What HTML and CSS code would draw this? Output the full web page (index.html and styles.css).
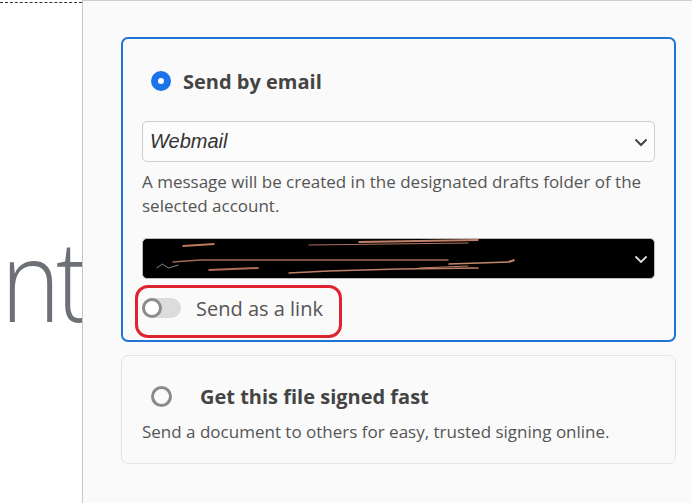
FILE: index.html
```html
<!DOCTYPE html>
<html>
<head>
<meta charset="utf-8">
<link rel="stylesheet" href="styles.css">
</head>
<body>
<div class="left">
  <div class="dash"></div>
  <div class="bigword">nt</div>
</div>
<div class="panel">
  <div class="card card-active">
    <div class="option-head">
      <span class="radio radio-on"></span>
      <span class="option-title">Send by email</span>
    </div>
    <div class="select">
      <span class="select-value">Webmail</span>
      <svg class="chev" width="14" height="10" viewBox="0 0 14 10"><path d="M1.5 2.5 L7 8 L12.5 2.5" fill="none" stroke="#444" stroke-width="2"/></svg>
    </div>
    <p class="desc">A message will be created in the designated drafts folder of the selected account.</p>
    <div class="select select-dark">
      <svg class="redact" width="480" height="41" viewBox="0 0 480 41">
        <path d="M34 8 L66 6" stroke="#c07a5a" stroke-width="2"/>
        <path d="M160 7 L320 5" stroke="#b07060" stroke-width="1.2"/>
        <path d="M210 4 L330 2" stroke="#c0806a" stroke-width="2"/>
        <path d="M24 24 L52 22 L300 22" stroke="#a06a55" stroke-width="1.3"/>
        <path d="M300 26 L360 24" stroke="#c08a6a" stroke-width="1.4"/>
        <path d="M60 32 L110 30" stroke="#b07058" stroke-width="2"/>
        <path d="M140 35 L180 33 L250 31 L330 30" stroke="#c0806a" stroke-width="1.5"/>
        <path d="M270 30 L320 28" stroke="#c08060" stroke-width="1"/>
        <path d="M8 30 L14 26 L20 30 L30 27" stroke="#888" stroke-width="1"/>
        <path d="M360 24 L366 22" stroke="#d08070" stroke-width="2"/>
      </svg>
      <svg class="chev" width="14" height="10" viewBox="0 0 14 10"><path d="M1.5 2.5 L7 8 L12.5 2.5" fill="none" stroke="#ddd" stroke-width="1.8"/></svg>
    </div>
    <div class="toggle-row">
      <span class="toggle"><span class="knob"></span></span>
      <span class="toggle-label">Send as a link</span>
      <span class="annot"></span>
    </div>
  </div>
  <div class="card card-plain">
    <div class="option-head option-head-2">
      <span class="radio radio-off"></span>
      <span class="option-title option-title-2">Get this file signed fast</span>
    </div>
    <p class="desc desc-2">Send a document to others for easy, trusted signing online.</p>
  </div>
</div>
</body>
</html>
```

FILE: styles.css
```css
html, body {
  margin: 0;
  padding: 0;
}
body {
  width: 692px;
  height: 503px;
  overflow: hidden;
  display: flex;
  font-family: "Open Sans", "Noto Sans", sans-serif;
  background: #fff;
}
.left {
  width: 82px;
  flex: none;
  position: relative;
  overflow: hidden;
  display: flex;
  flex-direction: column;
}
.dash {
  height: 0;
  border-top: 1px dashed #333;
  margin-top: 2px;
}
.bigword {
  margin-top: 220px;
  margin-left: 1px;
  font-size: 112px;
  font-weight: 300;
  color: #6d7077;
  line-height: 1;
  white-space: nowrap;
  letter-spacing: -5px;
  transform: scaleX(0.9);
  transform-origin: left center;
}
.panel {
  flex: 1;
  background: #fafafa;
  border-left: 1px solid #c8c8c8;
  border-top: 1px solid #cfcfcf;
  padding: 36px 16px 0 38px;
  display: flex;
  flex-direction: column;
}
.card {
  border-radius: 7px;
  background: #fafafa;
}
.card-active {
  border: 2px solid #1f74d6;
  padding: 0 19px 20px 19px;
}
.option-head {
  display: flex;
  align-items: center;
  height: 28px;
  margin-top: 28px;
  padding-left: 9px;
}
.radio {
  width: 20px;
  height: 20px;
  border-radius: 50%;
  box-sizing: border-box;
  flex: none;
}
.radio-on {
  border: 7px solid #1a73e8;
  background: #fff;
}
.radio-off {
  border: 3px solid #8a8a8a;
  width: 21px;
  height: 21px;
}
.option-title {
  margin-left: 12px;
  font-size: 20px;
  font-weight: 700;
  color: #444;
}
.select {
  margin-top: 26px;
  height: 41px;
  box-sizing: border-box;
  border: 1px solid #cdcdcd;
  border-radius: 5px;
  background: #fcfcfc;
  display: flex;
  align-items: center;
  padding: 0 6px 0 7px;
}
.select-value {
  flex: 1;
  font-style: italic;
  font-size: 20px;
  color: #333;
  font-family: "Liberation Sans", Arial, sans-serif;
}
.chev {
  flex: none;
}
.desc {
  margin: 8px 0 0 0;
  font-size: 17px;
  line-height: 24px;
  color: #555;
}
.select-dark {
  margin-top: 20px;
  background: #000;
  border-color: #bbb;
  padding-left: 0;
  overflow: hidden;
}
.redact {
  flex: 1;
}
.toggle-row {
  position: relative;
  display: flex;
  align-items: center;
  margin-top: 17px;
  height: 24px;
}
.toggle {
  width: 39px;
  height: 20px;
  border-radius: 10px;
  background: #dcdcdc;
  position: relative;
  flex: none;
}
.knob {
  position: absolute;
  left: 0;
  top: 0;
  width: 20px;
  height: 20px;
  box-sizing: border-box;
  border-radius: 50%;
  border: 3px solid #8c8c8c;
  background: #fff;
}
.toggle-label {
  margin-left: 15px;
  font-size: 20px;
  color: #555;
}
.annot {
  position: absolute;
  left: -7px;
  top: -11px;
  width: 207px;
  height: 53px;
  box-sizing: border-box;
  border: 3px solid #de2430;
  border-radius: 13px;
}
.card-plain {
  margin-top: 13px;
  border: 1px solid #e4e4e4;
  padding: 0 20px 19px 20px;
}
.option-head-2 {
  margin-top: 26px;
  padding-left: 9px;
}
.option-title-2 {
  margin-left: 28px;
}
.desc-2 {
  margin-top: 10px;
}
```
